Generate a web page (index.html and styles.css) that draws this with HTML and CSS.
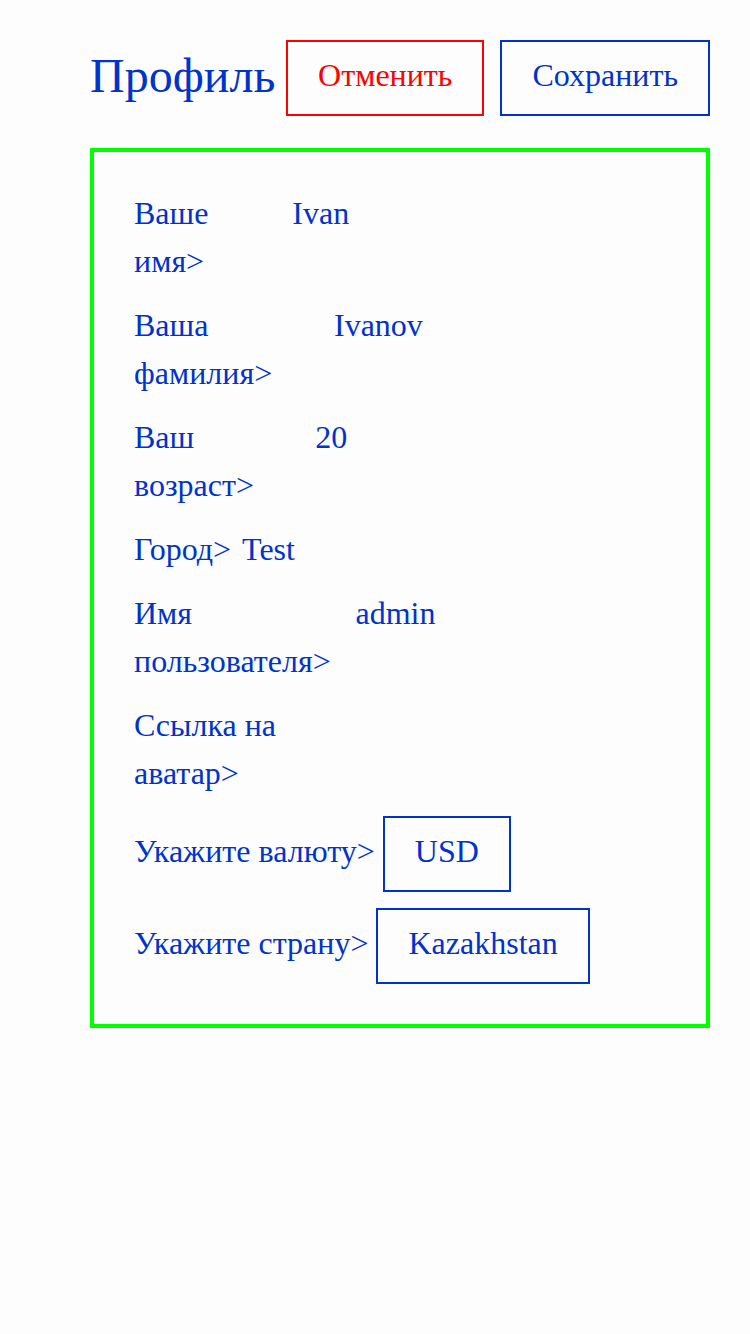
FILE: index.html
```html
<!DOCTYPE html>
<html lang="ru">
<head>
<meta charset="utf-8">
<title>Профиль</title>
<link rel="stylesheet" href="styles.css">
</head>
<body>
<div class="page">
  <header class="header">
    <h1 class="title">Профиль</h1>
    <div class="actions">
      <button class="btn btn-cancel" type="button">Отменить</button>
      <button class="btn btn-save" type="button">Сохранить</button>
    </div>
  </header>
  <form class="card">
    <div class="row">
      <span class="label">Ваше имя&gt;</span>
      <input class="field" type="text" value="Ivan">
    </div>
    <div class="row">
      <span class="label">Ваша фамилия&gt;</span>
      <input class="field" type="text" value="Ivanov">
    </div>
    <div class="row">
      <span class="label">Ваш возраст&gt;</span>
      <input class="field" type="text" value="20">
    </div>
    <div class="row">
      <span class="label">Город&gt;</span>
      <input class="field" type="text" value="Test">
    </div>
    <div class="row">
      <span class="label">Имя пользователя&gt;</span>
      <input class="field" type="text" value="admin">
    </div>
    <div class="row">
      <span class="label">Ссылка на аватар&gt;</span>
      <input class="field" type="text" value="">
    </div>
    <div class="row row-pick">
      <span class="label">Укажите валюту&gt;</span>
      <button class="btn" type="button">USD</button>
    </div>
    <div class="row row-pick">
      <span class="label">Укажите страну&gt;</span>
      <button class="btn" type="button">Kazakhstan</button>
    </div>
  </form>
</div>
</body>
</html>
```

FILE: styles.css
```css
html, body {
  margin: 0;
  padding: 0;
  background: #fdfdfd;
}

body {
  font-family: "Liberation Serif", "Times New Roman", serif;
  color: #0033cc;
}

.page {
  padding: 40px 40px 0 90px;
}

.header {
  display: flex;
  align-items: center;
  justify-content: space-between;
}

.title {
  margin: 0;
  padding-bottom: 4px;
  font-size: 48px;
  font-weight: normal;
  line-height: 56px;
  color: #0033cc;
}

.actions {
  display: flex;
  gap: 16px;
}

.btn {
  font-family: inherit;
  font-size: 32px;
  line-height: 48px;
  padding: 9px 30px 15px;
  border: 2px solid #0033cc;
  background: transparent;
  color: #0033cc;
  border-radius: 0;
  margin: 0;
}

.btn-cancel {
  border-color: #ff0000;
  color: #ff0000;
}

.card {
  margin-top: 32px;
  border: 4px solid #00ff00;
  padding: 40px;
  display: flex;
  flex-direction: column;
  gap: 16px;
}

.row {
  display: flex;
  align-items: flex-start;
  gap: 8px;
  font-size: 32px;
  line-height: 48px;
}

.row-pick {
  align-items: center;
}

.label {
  flex: 0 1 auto;
  margin: -3px 0 3px;
}

.field {
  flex: 0 1 390px;
  width: 390px;
  min-width: 0;
  height: 48px;
  box-sizing: border-box;
  padding: 0 3px 6px;
  border: 0;
  margin: 0;
  background: transparent;
  font-family: inherit;
  font-size: 32px;
  color: #0033cc;
  outline: none;
}
```
